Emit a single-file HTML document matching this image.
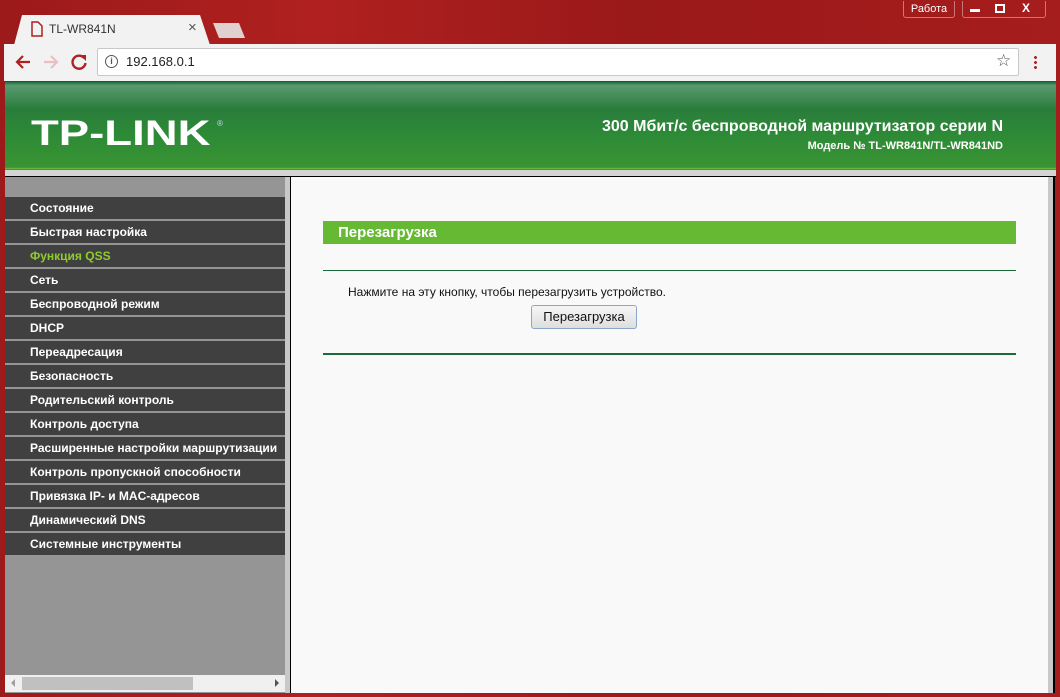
<!DOCTYPE html>
<html><head><meta charset="utf-8"><style>
*{margin:0;padding:0;box-sizing:border-box}
body{width:1060px;height:697px;overflow:hidden;background:#a51c1c;font-family:"Liberation Sans",Arial,sans-serif;position:relative}
.abs{position:absolute}
.frame{left:0;top:0;width:1060px;height:697px;background:linear-gradient(90deg,#9c1a1a,#b02020 30%,#9a1919 60%,#a61d1d);}
.tab{left:14px;top:15px;width:196px;height:30px;background:#f2f2f2;clip-path:polygon(8px 0,186px 0,196px 30px,0 30px);}
.tab2{left:213px;top:23px;width:32px;height:15px;background:#e0d0d0;clip-path:polygon(0 0,26px 0,32px 15px,6px 15px);}
.toolbar{left:4px;top:44px;width:1052px;height:37px;background:#f2f2f2}
.addr{left:97px;top:48px;width:922px;height:28px;background:#fff;border:1px solid #c8c8c8;border-radius:2px}
.menu div{height:22px;margin-bottom:2px;background:#404040;color:#fff;font-weight:bold;font-size:12px;padding-left:25px;line-height:22px}
</style></head><body>
<div class="abs frame"></div>
<div class="abs tab"></div>
<svg class="abs" style="left:31px;top:21px" width="12" height="16"><path d="M1 1h6l4 4v10H1z" fill="none" stroke="#b02020" stroke-width="1.5"/></svg>
<div class="abs" style="left:49px;top:22px;font-size:12px;color:#333">TL-WR841N</div>
<div class="abs" style="left:188px;top:19px;font-size:15px;color:#555">×</div>
<div class="abs tab2"></div>
<div class="abs" style="left:903px;top:1px;width:52px;height:17px;border:1px solid #c77;border-top:none;border-radius:0 0 3px 3px;color:#fff;font-size:11px;text-align:center;line-height:16px">Работа</div>
<div class="abs" style="left:962px;top:1px;width:84px;height:17px;border:1px solid #c77;border-top:none;border-radius:0 0 3px 3px;color:#fff;font-size:12px;font-weight:bold">
<span class="abs" style="left:7px;top:8px;width:10px;height:3px;background:#fff"></span>
<span class="abs" style="left:32px;top:3px;width:10px;height:9px;border:2px solid #fff"></span>
<span class="abs" style="left:59px;top:0px">X</span></div>
<div class="abs toolbar"></div>
<svg class="abs" style="left:14px;top:54px" width="18" height="16"><path d="M16 8H3M9 2L3 8l6 6" fill="none" stroke="#b02020" stroke-width="2.2"/></svg>
<svg class="abs" style="left:42px;top:54px" width="18" height="16"><path d="M2 8h13M9 2l6 6-6 6" fill="none" stroke="#e8c0c0" stroke-width="2.2"/></svg>
<svg class="abs" style="left:70px;top:53px" width="18" height="18"><path d="M14 5A6.5 6.5 0 1 0 15.5 10" fill="none" stroke="#b02020" stroke-width="2.4"/><path d="M10 2h6v6z" fill="#b02020"/></svg>
<div class="abs addr"></div>
<div class="abs" style="left:105px;top:55px;width:13px;height:13px;border:1.5px solid #555;border-radius:50%;font-size:9px;text-align:center;line-height:11px;color:#555;font-weight:bold">i</div>
<div class="abs" style="left:126px;top:54px;font-size:13px;color:#222">192.168.0.1</div>
<div class="abs" style="left:996px;top:51px;font-size:17px;color:#555">☆</div>
<div class="abs" style="left:1034px;top:55px;width:3px;height:15px;background:radial-gradient(circle,#b02020 1.3px,transparent 1.6px) 0 0/3px 5px"></div>
<div class="abs" style="left:5px;top:82px;width:1051px;height:89px;background:linear-gradient(180deg,#1c6e3c 0,#5a9a70 4%,#2a7d3c 30%,#2d8a36 60%,#3a9433 96%,#6cbf3c 97%,#1e5e2a 100%)"></div>
<div class="abs" style="left:31px;top:114px;font-size:35px;font-weight:bold;color:#fff;letter-spacing:0px;transform:scaleX(1.3);transform-origin:left;line-height:40px">TP-LINK</div>
<div class="abs" style="left:217px;top:119px;font-size:8px;color:#cde">®</div>
<div class="abs" style="right:57px;top:118px;font-size:16px;font-weight:bold;color:#fff">300 Мбит/с беспроводной маршрутизатор серии N</div>
<div class="abs" style="right:57px;top:140px;font-size:11px;font-weight:bold;color:#fff">Модель № TL-WR841N/TL-WR841ND</div>
<div class="abs" style="left:5px;top:170px;width:1051px;height:7px;background:#d4d4d4"></div>
<div class="abs" style="left:5px;top:176px;width:1051px;height:1px;background:#000"></div>
<div class="abs" style="left:5px;top:177px;width:280px;height:516px;background:#959595"></div>
<div class="abs menu" style="left:5px;top:197px;width:280px">
<div>Состояние</div><div>Быстрая настройка</div><div style="color:#8ecc2e">Функция QSS</div><div>Сеть</div><div>Беспроводной режим</div><div>DHCP</div><div>Переадресация</div><div>Безопасность</div><div>Родительский контроль</div><div>Контроль доступа</div><div>Расширенные настройки маршрутизации</div><div>Контроль пропускной способности</div><div>Привязка IP- и MAC-адресов</div><div>Динамический DNS</div><div>Системные инструменты</div></div>
<div class="abs" style="left:5px;top:675px;width:280px;height:17px;background:#f0f0f0"></div>
<div class="abs" style="left:22px;top:677px;width:171px;height:13px;background:#c0c0c0"></div>
<div class="abs" style="left:11px;top:679px;border:4px solid transparent;border-right-color:#a0a0a0;border-left:0"></div>
<div class="abs" style="left:275px;top:679px;border:4px solid transparent;border-left-color:#555;border-right:0"></div>
<div class="abs" style="left:285px;top:177px;width:5px;height:516px;background:#c8c8c8"></div>
<div class="abs" style="left:290px;top:177px;width:1px;height:516px;background:#000"></div>
<div class="abs" style="left:291px;top:177px;width:757px;height:516px;background:#f9f9f9"></div>
<div class="abs" style="left:1048px;top:177px;width:5px;height:516px;background:#c8c8c8"></div>
<div class="abs" style="left:1053px;top:177px;width:2px;height:516px;background:#000"></div>
<div class="abs" style="left:323px;top:221px;width:693px;height:23px;background:#66b933;color:#fff;font-size:15px;font-weight:bold;padding-left:15px;line-height:23px">Перезагрузка</div>
<div class="abs" style="left:323px;top:270px;width:693px;height:1px;background:#1a6a3a"></div>
<div class="abs" style="left:348px;top:285px;font-size:12px;color:#111">Нажмите на эту кнопку, чтобы перезагрузить устройство.</div>
<div class="abs" style="left:531px;top:305px;width:106px;height:24px;border:1px solid #8aa6cc;border-radius:3px;background:linear-gradient(#f6f6f6,#dedede);font-size:13px;text-align:center;line-height:22px;color:#111">Перезагрузка</div>
<div class="abs" style="left:323px;top:353px;width:693px;height:2px;background:#1a6a3a"></div>
</body></html>
